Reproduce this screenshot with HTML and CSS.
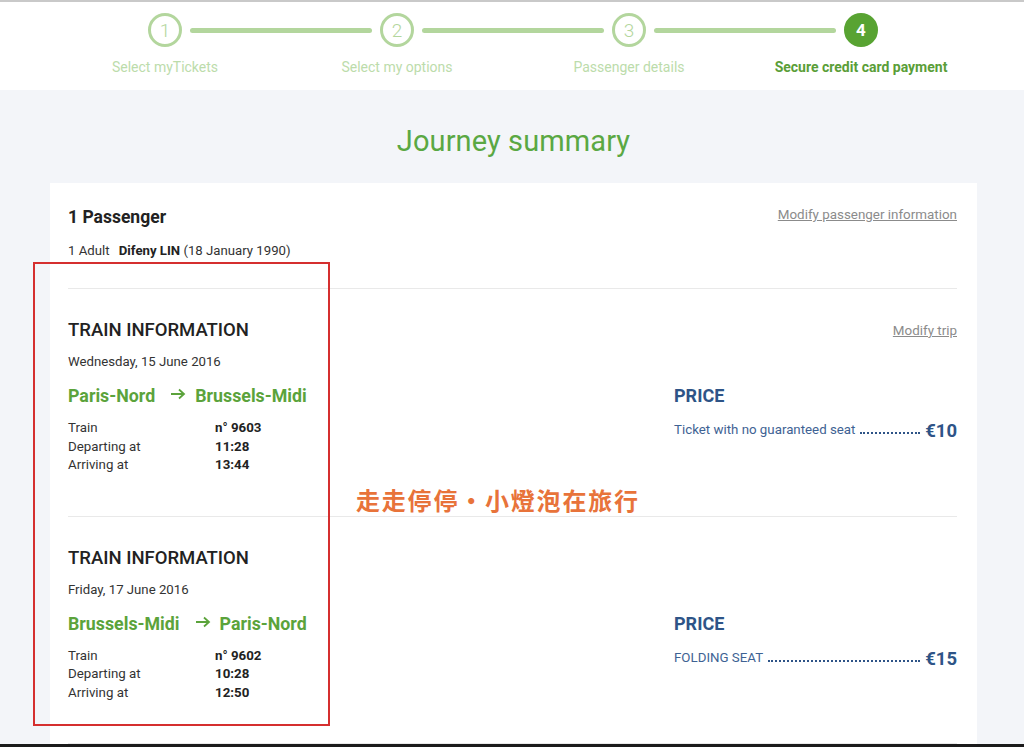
FILE: index.html
```html
<!DOCTYPE html>
<html>
<head>
    <meta charset="utf-8">
    <link rel="stylesheet" href="styles.css">
</head>
<body>
    <div class="header">
        <div class="steps">
            <div class="step done">
                <div class="track"><span class="seg left hide"></span><span class="circle">1</span><span class="seg right"></span></div>
                <div class="label">Select myTickets</div>
            </div>
            <div class="step done">
                <div class="track"><span class="seg left"></span><span class="circle">2</span><span class="seg right"></span></div>
                <div class="label">Select my options</div>
            </div>
            <div class="step done">
                <div class="track"><span class="seg left"></span><span class="circle">3</span><span class="seg right"></span></div>
                <div class="label">Passenger details</div>
            </div>
            <div class="step active">
                <div class="track"><span class="seg left"></span><span class="circle">4</span><span class="seg right hide"></span></div>
                <div class="label">Secure credit card payment</div>
            </div>
        </div>
    </div>

    <div class="main">
        <h1 class="page_title">Journey summary</h1>

        <div class="card">
            <div class="section passenger">
                <div class="section_head">
                    <div class="pass_title">1 Passenger</div>
                    <a class="modify" href="#">Modify passenger information</a>
                </div>
                <div class="pass_line">1 Adult <b>Difeny LIN</b> (18 January 1990)</div>
            </div>

            <div class="section">
                <div class="section_head">
                    <div class="sec_title">TRAIN INFORMATION</div>
                    <a class="modify" href="#">Modify trip</a>
                </div>
                <div class="sec_body">
                    <div class="info">
                        <div class="date">Wednesday, 15 June 2016</div>
                        <div class="route">Paris-Nord<svg class="arrow" width="16" height="12" viewBox="0 0 16 12"><path d="M1 6H14M9 1.5L14 6L9 10.5" fill="none" stroke="#5ba33b" stroke-width="1.8"/></svg>Brussels-Midi</div>
                        <div class="rows">
                            <span>Train</span><b>n° 9603</b>
                            <span>Departing at</span><b>11:28</b>
                            <span>Arriving at</span><b>13:44</b>
                        </div>
                    </div>
                    <div class="price">
                        <div class="price_title">PRICE</div>
                        <div class="price_row">
                            <span class="price_name">Ticket with no guaranteed seat</span>
                            <span class="leader"></span>
                            <span class="amount">€10</span>
                        </div>
                    </div>
                </div>
            </div>

            <div class="section">
                <div class="section_head">
                    <div class="sec_title">TRAIN INFORMATION</div>
                </div>
                <div class="sec_body">
                    <div class="info">
                        <div class="date">Friday, 17 June 2016</div>
                        <div class="route">Brussels-Midi<svg class="arrow" width="16" height="12" viewBox="0 0 16 12"><path d="M1 6H14M9 1.5L14 6L9 10.5" fill="none" stroke="#5ba33b" stroke-width="1.8"/></svg>Paris-Nord</div>
                        <div class="rows">
                            <span>Train</span><b>n° 9602</b>
                            <span>Departing at</span><b>10:28</b>
                            <span>Arriving at</span><b>12:50</b>
                        </div>
                    </div>
                    <div class="price">
                        <div class="price_title">PRICE</div>
                        <div class="price_row">
                            <span class="price_name">FOLDING SEAT</span>
                            <span class="leader"></span>
                            <span class="amount">€15</span>
                        </div>
                    </div>
                </div>
            </div>
        </div>
    </div>

    <!-- annotation on the screenshot -->
    <div class="mark_box"></div>
    <div class="mark_text">走走停停・小燈泡在旅行</div>
    <div class="frame_bottom"></div>
</body>
</html>
```

FILE: styles.css
```css
body {
    margin: 0;
    background-color: #f3f5f9;
    font-family: Roboto, "Liberation Sans", sans-serif;
    color: #222;
    overflow: hidden;
    height: 747px;
}
.header {
    background-color: #fff;
    border-top: 2px solid #c9c9c9;
    height: 88px;
}
.steps {
    width: 928px;
    margin-left: 49px;
    display: flex;
}
.step {
    flex: 1;
    display: flex;
    flex-direction: column;
    align-items: center;
}
.track {
    width: 100%;
    display: flex;
    align-items: center;
    margin-top: 11px;
}
.seg {
    flex: 1;
    height: 5px;
    background-color: #b3d69d;
}
.seg.left {
    border-radius: 0 3px 3px 0;
}
.seg.right {
    border-radius: 3px 0 0 3px;
}
.seg.hide {
    visibility: hidden;
}
.circle {
    width: 28px;
    height: 28px;
    border: 3px solid #b3d69d;
    border-radius: 50%;
    margin: 0 8px;
    display: flex;
    justify-content: center;
    align-items: center;
    font-size: 19px;
    font-weight: 300;
    color: #b3d69d;
}
.label {
    margin-top: 12px;
    font-size: 14px;
    color: #bcdcab;
}
.active .circle {
    background-color: #58a332;
    border-color: #58a332;
    color: #fff;
    font-weight: bold;
    font-size: 17px;
}
.active .label {
    color: #5a9e38;
    font-weight: bold;
}
.main {
    width: 927px;
    margin-left: 50px;
}
.page_title {
    margin: 33px 0 24px;
    text-align: center;
    font-size: 29px;
    font-weight: normal;
    letter-spacing: 0.1px;
    color: #5aa843;
    line-height: 36px;
}
.card {
    background-color: #fff;
    padding: 23px 20px 0 18px;
}
.section {
    border-bottom: 1px solid #e9e9e9;
    padding: 29px 0 41px;
}
.section.passenger {
    padding: 0 0 28px;
}
.section_head {
    display: flex;
    justify-content: space-between;
    align-items: center;
}
.passenger .section_head {
    align-items: flex-start;
}
.pass_title {
    font-size: 17.5px;
    font-weight: bold;
    line-height: 20px;
}
.modify {
    font-size: 13.4px;
    line-height: 15px;
    color: #8b8b8b;
}
.pass_line {
    margin-top: 15px;
    font-size: 13.2px;
    line-height: 18px;
    color: #333;
}
.pass_line b {
    margin-left: 6px;
    color: #222;
}
.section .section_head {
    margin-top: 1px;
}
.sec_title {
    font-size: 18.5px;
    font-weight: 500;
    line-height: 22px;
    color: #222;
}
.sec_body {
    display: flex;
}
.info {
    flex: 1;
}
.date {
    margin-top: 12px;
    font-size: 13.2px;
    line-height: 18px;
    color: #333;
}
.route {
    margin-top: 14px;
    font-size: 17.8px;
    font-weight: bold;
    line-height: 22px;
    color: #5ba33b;
}
.arrow {
    margin: 0 9px 0 15px;
    vertical-align: 2px;
}
.rows {
    margin-top: 12px;
    display: grid;
    grid-template-columns: 147px auto;
    font-size: 13.3px;
    line-height: 18.5px;
    color: #333;
}
.rows b {
    color: #222;
}
.price {
    width: 283px;
    padding-top: 44px;
    color: #2e5487;
}
.price_title {
    font-size: 18px;
    font-weight: bold;
    line-height: 22px;
}
.price_row {
    margin-top: 10px;
    display: flex;
    align-items: baseline;
}
.price_name {
    font-size: 13.3px;
    color: #3e6293;
}
.leader {
    flex: 1;
    margin: 0 5px;
    border-bottom: 2px dotted #2e5487;
}
.amount {
    position: relative;
    top: 3px;
    font-size: 18.5px;
    font-weight: bold;
}
.mark_box {
    position: absolute;
    left: 33px;
    top: 262px;
    width: 293px;
    height: 460px;
    border: 2px solid #d52f2f;
}
.mark_text {
    position: absolute;
    left: 356px;
    top: 484px;
    font-family: "Noto Sans CJK TC", sans-serif;
    font-size: 24px;
    font-weight: bold;
    letter-spacing: 1.8px;
    color: #e8733a;
    line-height: 32px;
}
.frame_bottom {
    position: fixed;
    left: 0;
    right: 0;
    bottom: 0;
    height: 3px;
    background-color: #1b1b1b;
}
```
